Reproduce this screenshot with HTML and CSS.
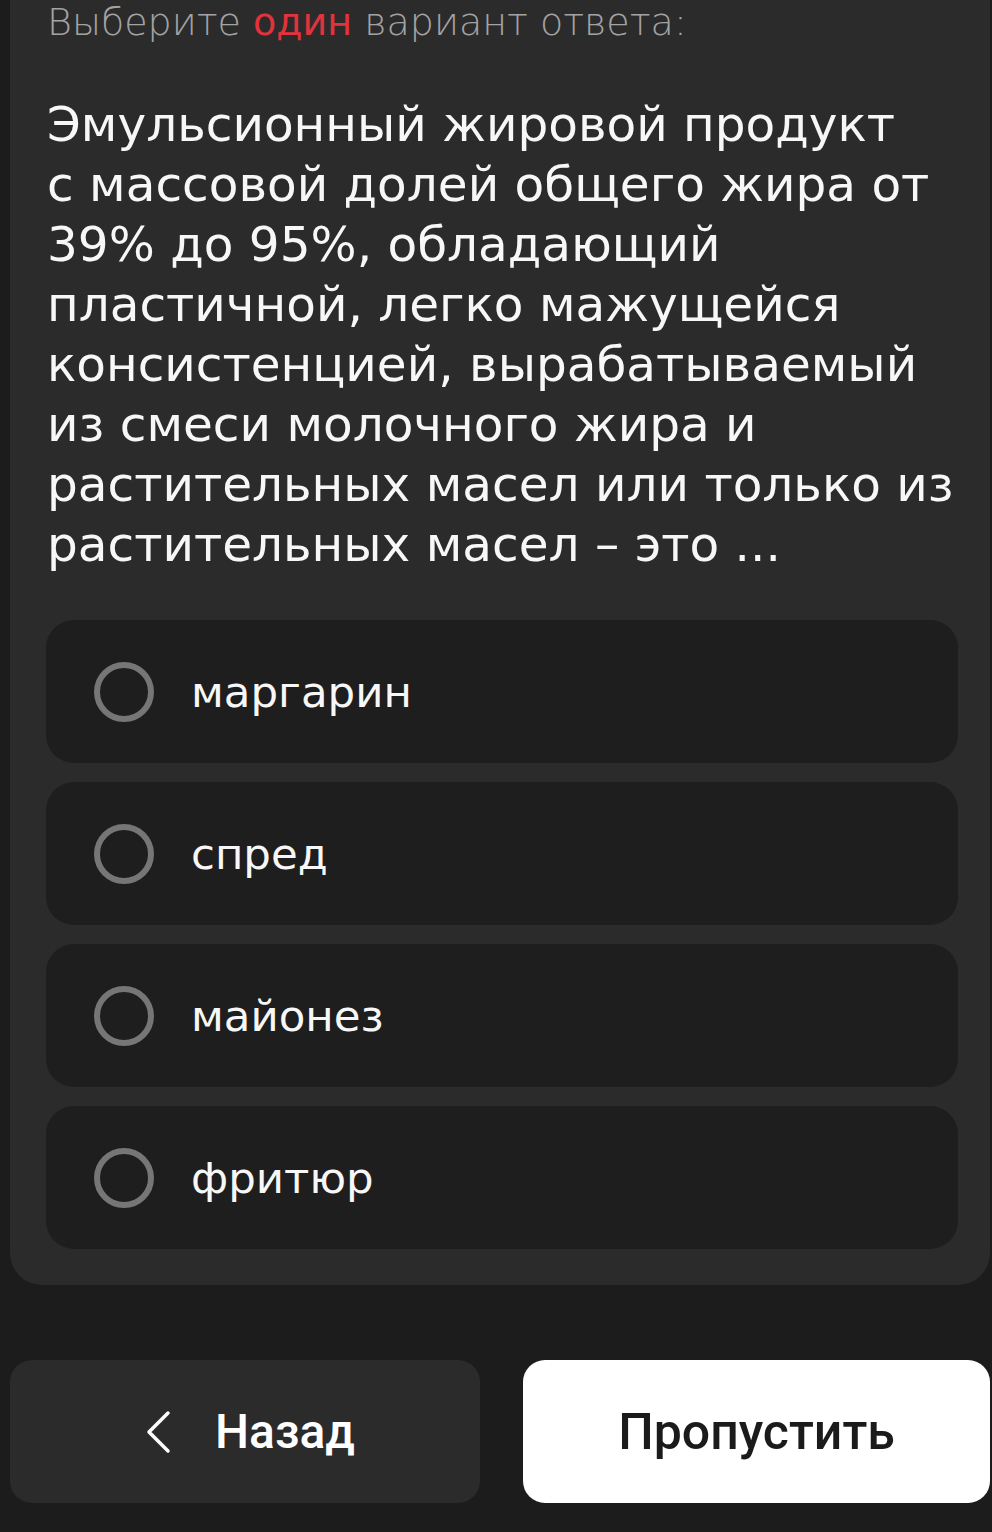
FILE: index.html
```html
<!DOCTYPE html>
<html lang="ru">
	<head>
		<meta charset="utf-8">
		<title>Тест</title>
		<link rel="stylesheet" href="styles.css">
	</head>
	<body>
		<main class="page">

			<section class="quiz-card">
				<p class="hint">Выберите <span class="accent">один</span> вариант ответа:</p>

				<h1 class="question">Эмульсионный жировой продукт с&nbsp;массовой долей общего жира от 39% до 95%, обладающий пластичной, легко мажущейся консистенцией, вырабатываемый из смеси молочного жира и растительных масел или только из растительных масел – это ...</h1>

				<ul class="options">
					<li class="option"><span class="radio"></span><span class="option-label">маргарин</span></li>
					<li class="option"><span class="radio"></span><span class="option-label">спред</span></li>
					<li class="option"><span class="radio"></span><span class="option-label">майонез</span></li>
					<li class="option"><span class="radio"></span><span class="option-label">фритюр</span></li>
				</ul>
			</section>

			<nav class="actions">
				<button class="btn btn-back" type="button">
					<svg class="chevron" width="26" height="44" viewBox="0 0 26 44">
						<path d="M23 3 L4 22 L23 41" fill="none" stroke="#fff" stroke-width="3.5" stroke-linecap="round" stroke-linejoin="round"/>
					</svg>
					Назад
				</button>
				<button class="btn btn-skip" type="button">Пропустить</button>
			</nav>

		</main>
	</body>
</html>
```

FILE: styles.css
```css
html, body {
	margin: 0;
	padding: 0;
	background: #1c1c1c;
}

.page {
	padding: 0 2px 29px 10px;
	font-family: "DejaVu Sans", "Noto Sans", sans-serif;
}

/* Question card */
.quiz-card {
	background: #2b2b2b;
	border-radius: 0 0 32px 32px;
	padding: 0 32px 36px 36px;
}

.hint {
	margin: 0;
	padding-left: 1px;
	font-size: 38px;
	line-height: 44px;
	font-weight: 300;
	color: #a3a3a3;
}
.hint .accent {
	color: #e2333d;
	font-weight: 400;
}

.question {
	margin: 50px 0 0 0;
	padding: 0 0 0 1px;
	font-size: 48.5px;
	line-height: 60px;
	font-weight: 400;
	color: #f7f7f7;
}

/* Answers */
.options {
	list-style: none;
	margin: 46px 0 0 0;
	padding: 0;
	display: flex;
	flex-direction: column;
	gap: 19px;
}

.option {
	display: flex;
	align-items: center;
	gap: 37px;
	height: 143px;
	padding-left: 48px;
	background: #1e1e1e;
	border-radius: 28px;
}

.radio {
	box-sizing: border-box;
	width: 60px;
	height: 60px;
	border: 6px solid #767676;
	border-radius: 50%;
	flex: none;
}

.option-label {
	font-size: 43.5px;
	color: #f7f7f7;
}

/* Bottom buttons */
.actions {
	margin-top: 75px;
	display: grid;
	grid-template-columns: 470px 1fr;
	gap: 43px;
}

.btn {
	height: 143px;
	border: none;
	border-radius: 22px;
	font-family: Roboto, "Liberation Sans", sans-serif;
	font-size: 50px;
	font-weight: 500;
	display: flex;
	align-items: center;
	justify-content: center;
}

.btn-back {
	background: #2b2b2b;
	color: #fff;
	font-size: 48px;
	gap: 44px;
	padding-left: 16px;
}

.btn-skip {
	background: #fff;
	color: #1b1b1b;
}
```
